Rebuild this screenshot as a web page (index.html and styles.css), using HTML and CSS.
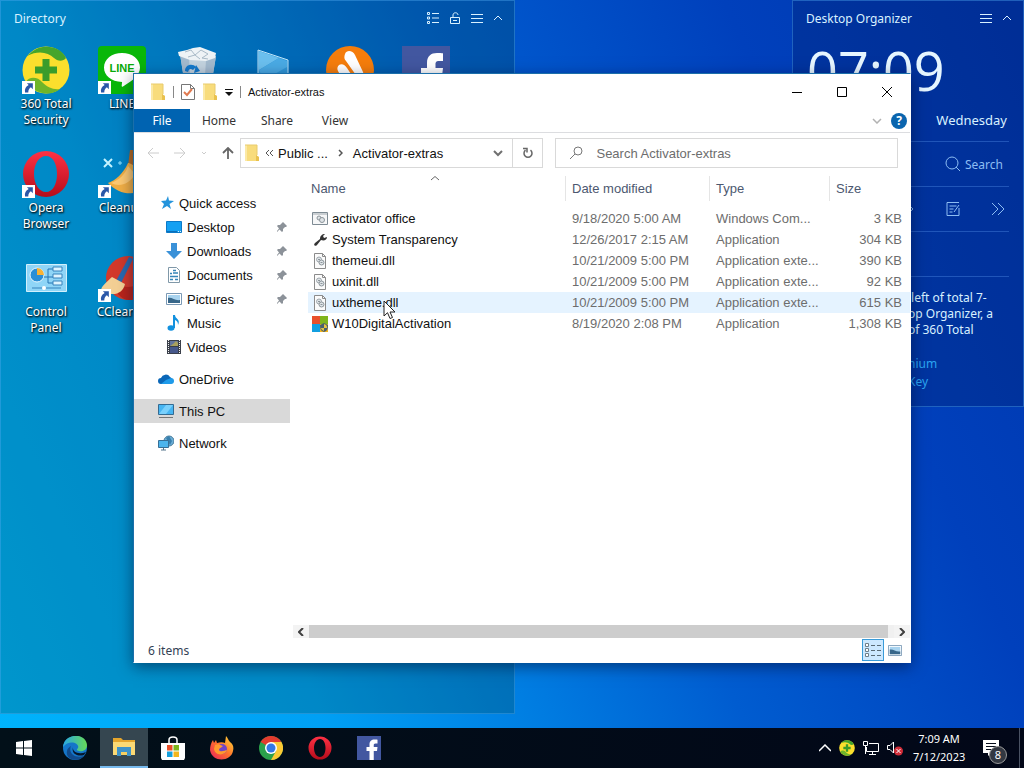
FILE: index.html
```html
<!DOCTYPE html>
<html lang="en">
<head>
    <meta charset="UTF-8">
    <meta name="viewport" content="width=device-width, initial-scale=1.0">
    <title>Activator-extras</title>
    <link rel="stylesheet" href="styles.css">
</head>
<body>
    <!-- shared symbols -->
    <svg class="defs" width="0" height="0" aria-hidden="true">
        <symbol id="folder" viewBox="0 0 16 18">
            <path d="M1 1h12v11l2 1v4H1z" fill="#f8dc7c"/>
            <path d="M12 11l3 2v4h-3z" fill="#e9c14e"/>
            <path d="M1 1h2v16H1z" fill="#fbe9a6"/>
            <path d="M1 1h12v10" fill="none" stroke="#e8cb6c"/>
        </symbol>
        <symbol id="pin" viewBox="0 0 12 12">
            <path d="M7 1l4 4-1 1-1 0-2 2 0 2-1 1-2.500-2.500L1 11l0-1L3 7.500 1 5l1-1h2l2-2z" fill="#8c9299"/>
        </symbol>
        <symbol id="dll" viewBox="0 0 16 16">
            <path d="M2.500.500h8l3 3v12h-11z" fill="#fbfbfb" stroke="#8b8b8b"/>
            <path d="M10.500.500v3h3" fill="none" stroke="#8b8b8b"/>
            <circle cx="7" cy="6.500" r="2.500" fill="#dfe4e7" stroke="#a0a8ae"/>
            <circle cx="9.500" cy="9.500" r="2.500" fill="#dfe4e7" stroke="#8b949a"/>
            <path d="M6 6.500h2M8.500 9.500h2" stroke="#8b949a"/>
        </symbol>
        <symbol id="shortcut" viewBox="0 0 12 12">
            <path d="M0 0h12v12H0z" fill="#fff"/>
            <path d="M4.500 2H10v5.500L8.200 5.800C6.500 7 5.800 8.300 5.800 10.500H2.800C2.200 7.500 3.500 5 6.200 3.800z" fill="#2a57a8"/>
        </symbol>
        <symbol id="total360" viewBox="0 0 48 48">
            <circle cx="24" cy="24" r="23.500" fill="#fbdf2d"/>
            <path d="M11 5C20-2 38-1 44 12c-3 4-9 3-12 0C26 6 16 4 5 10z" fill="#45a52c"/>
            <path d="M4 36c3-6 12-5 16 0 5 5 11 8 18 7-9 8-26 5-34-7z" fill="#6fb52a"/>
            <path d="M20.500 13h7v7.500h7.500v7h-7.500V35h-7v-7.500H13v-7h7.500z" fill="#3a9c2b"/>
        </symbol>
        <symbol id="opera" viewBox="0 0 48 48">
            <linearGradient id="operaRed" x1="0" y1="0" x2="0" y2="1">
                <stop offset="0" stop-color="#ff3144"/>
                <stop offset="1" stop-color="#b50d1b"/>
            </linearGradient>
            <path fill-rule="evenodd" d="M24 1a23 23 0 1 0 0 46a23 23 0 1 0 0-46zM24 6c7 0 11 8 11 18s-4 18-11 18-12-8-12-18S17 6 24 6z" fill="url(#operaRed)"/>
        </symbol>
        <symbol id="facebook" viewBox="0 0 48 48">
            <path d="M0 0h48v48H0z" fill="#4257a0"/>
            <path d="M25 48V30h-6v-8h6v-5c0-7 4-10 10-10 2 0 5 0 6 .3V15h-4c-3 0-3.500 1.500-3.500 3.500V22H41l-1 8h-6.500v18z" fill="#fff"/>
        </symbol>
        <symbol id="thumbs" viewBox="0 0 16 12">
            <path d="M.500.500h15v11H.500z" fill="#fff" stroke="#7a99b5"/>
            <path d="M2 2h12v8H2z" fill="#a8d3ef"/>
            <path d="M2 5c4-1 7 3 12 2v3H2z" fill="#38678a"/>
        </symbol>
    </svg>

    <main class="desktop">
        <section class="panel directory">
            <header class="panel-header">
                <h2>Directory</h2>
                <div class="panel-tools">
                    <button type="button" aria-label="List view"><svg width="12" height="12" viewBox="0 0 12 12"><path d="M.500.500h2v2h-2zM.500 5h2v2h-2zM.500 9.500h2v2h-2zM5 1.500h7M5 6h7M5 10.500h7"/></svg></button>
                    <button type="button" aria-label="Lock"><svg width="12" height="12" viewBox="0 0 12 12"><path d="M1.500 5.500h9v6h-9zM4 5.500V3c0-3 5-3 5 0M4 8.500h4"/></svg></button>
                    <button type="button" aria-label="Menu"><svg width="12" height="12" viewBox="0 0 12 12"><path d="M0 2.500h12M0 6.500h12M0 10.500h12"/></svg></button>
                    <button type="button" aria-label="Collapse"><svg width="10" height="12" viewBox="0 0 10 12"><path d="M1 8l4-4 4 4"/></svg></button>
                </div>
            </header>
            <div class="shortcuts">
                <a href="#" class="shortcut">
                    <svg class="shortcut-icon" viewBox="0 0 48 48"><use href="#total360"/><use href="#shortcut" x="0" y="35" width="13" height="13"/></svg>
                    360 Total Security
                </a>
                <a href="#" class="shortcut">
                    <svg class="shortcut-icon" viewBox="0 0 48 48">
                        <rect width="48" height="48" rx="4" fill="#09b709"/>
                        <path d="M24 7c10 0 18 6 18 14.500 0 8-9 14-17 19-1 .5-1.500 0-1.300-1l.4-3.500C13 35.500 6 29.500 6 21.500 6 13 14 7 24 7z" fill="#fff"/>
                        <text x="24" y="26" text-anchor="middle" class="line-logo">LINE</text>
                        <use href="#shortcut" x="0" y="35" width="13" height="13"/>
                    </svg>
                    LINE
                </a>
                <a href="#" class="shortcut" aria-label="Recycle Bin">
                    <svg class="shortcut-icon" viewBox="0 0 48 48">
                        <path d="M6 8l36 2-6 36H12z" fill="#c3d3df"/>
                        <path d="M6 8l9 4 2 34h-5zM42 10l-10 4-2 32h6z" fill="#a3bace"/>
                        <path d="M4 6l9-2 6-2 7-1 8 3 8 3-1 5-9 3-16-1-11-4z" fill="#eef3f6"/>
                        <path d="M11 6l6-2 4 5 6-5 7 4-6 4 6 1M14 11l7-2 5 4" fill="none" stroke="#a9bac7"/>
                        <path d="M11 25c0-7 8-8 11-4l-3 3c-3-2-4-1-5 2zM22 19l4 6-6 2zM10 29l6-2 3 6-5 2z" fill="#1379cb"/>
                    </svg>
                </a>
                <a href="#" class="shortcut" aria-label="This PC">
                    <svg class="shortcut-icon" viewBox="0 0 48 48">
                        <path d="M8 4l30 10v24L8 34z" fill="#2f97d8" stroke="#bfe3f7"/>
                        <path d="M9 5l20 7L9 24z" fill="#6bbfee"/>
                        <path d="M9 24l20-12 8 3v6L14 34z" fill="#4aaae4"/>
                    </svg>
                </a>
                <a href="#" class="shortcut" aria-label="Avast">
                    <svg class="shortcut-icon" viewBox="0 0 48 48">
                        <circle cx="24" cy="24" r="24" fill="#f57d0c"/>
                        <path d="M19 8c2-5 8-3 10 1l8 17c2 6-2 8-5 6L20 15c-2-2-2-4-1-7zM13 19c3-2 6 0 8 3l12 18H20l-8-15c-1-2-1-4 1-6z" fill="#fff"/>
                    </svg>
                </a>
                <a href="#" class="shortcut" aria-label="Facebook">
                    <svg class="shortcut-icon" viewBox="0 0 48 48"><use href="#facebook"/></svg>
                </a>
                <a href="#" class="shortcut first-col">
                    <svg class="shortcut-icon" viewBox="0 0 48 48"><use href="#opera"/><use href="#shortcut" x="0" y="35" width="13" height="13"/></svg>
                    Opera Browser
                </a>
                <a href="#" class="shortcut">
                    <svg class="shortcut-icon" viewBox="0 0 48 48">
                        <path d="M6 9l8 8M14 9l-8 8" stroke="#c4f3ff" stroke-width="2"/>
                        <path d="M20 13l4 0M22 11v4" stroke="#8fe0ff"/>
                        <path d="M32 0h5v16h-7z" fill="#b66b22"/>
                        <path d="M30 13c4 0 18 10 16 27-12 6-26 4-36-7 8-3 15-9 20-20z" fill="#f0ae45"/>
                        <path d="M30 16c-3 9-9 14-17 17 8 4 18 2 24-9z" fill="#fcc872"/>
                        <use href="#shortcut" x="0" y="35" width="13" height="13"/>
                    </svg>
                    Cleanup
                </a>
                <a href="#" class="shortcut first-col">
                    <svg class="shortcut-icon" viewBox="0 0 48 48">
                        <path d="M4.500 10.500h40v27h-40z" fill="#8fd5f7" stroke="#d1f0fc"/>
                        <circle cx="15" cy="21" r="7" fill="#2b8fd6" stroke="#e8f8ff"/>
                        <path d="M15 21v-7a7 7 0 0 1 7 7z" fill="#f9b233"/>
                        <path d="M22 23h4v-8h5M26 23h5M26 23v6h5" fill="none" stroke="#2475b5"/>
                        <path d="M31 13h9v4h-9zM31 20h9v4h-9zM31 27h9v4h-9z" fill="#dff4ff" stroke="#3683bd"/>
                        <path d="M10 34h29" stroke="#3683bd"/>
                        <circle cx="22" cy="34" r="2" fill="#fff"/>
                    </svg>
                    Control Panel
                </a>
                <a href="#" class="shortcut">
                    <svg class="shortcut-icon" viewBox="0 0 48 48">
                        <circle cx="30" cy="24" r="22" fill="#d2392b"/>
                        <path d="M20 30c6 4 14 4 20 0v14c-9 4-15 2-20-4z" fill="#b8241b"/>
                        <path d="M31 3l4 2-12 24-5-2z" fill="#2a68ae"/>
                        <path d="M14 23l13 7c-2 10-12 13-24 7 0-5 5-8 11-14z" fill="#f3cf94"/>
                        <use href="#shortcut" x="0" y="35" width="13" height="13"/>
                    </svg>
                    CCleaner
                </a>
            </div>
        </section>

        <aside class="panel organizer">
            <header class="panel-header">
                <h2>Desktop Organizer</h2>
                <div class="panel-tools">
                    <button type="button" aria-label="Menu"><svg width="12" height="12" viewBox="0 0 12 12"><path d="M0 2.500h12M0 6.500h12M0 10.500h12"/></svg></button>
                    <button type="button" aria-label="Collapse"><svg width="10" height="12" viewBox="0 0 10 12"><path d="M1 8l4-4 4 4"/></svg></button>
                </div>
            </header>
            <time class="big-clock">07:09</time>
            <p class="weekday">Wednesday</p>
            <div class="org-row">
                <button type="button" class="org-search">
                    <svg width="16" height="16" viewBox="0 0 16 16"><circle cx="7" cy="7" r="6"/><path d="M11 11l4 4"/></svg>
                    Search
                </button>
            </div>
            <div class="org-row org-icons">
                <button type="button" aria-label="Open"><svg width="14" height="14" viewBox="0 0 14 14"><path d="M7 2l5 5-5 5"/></svg></button>
                <button type="button" aria-label="Notes"><svg width="14" height="14" viewBox="0 0 14 14"><path d="M13 6v7.500H1V.500h12M3.500 4h7M3.500 7h4M3.500 10h3M13 3L8 10"/></svg></button>
                <button type="button" aria-label="More"><svg width="14" height="14" viewBox="0 0 14 14"><path d="M1 1l6 6-6 6M7 1l6 6-6 6"/></svg></button>
            </div>
            <div class="org-row"></div>
            <div class="trial">
                <p>&nbsp;left of total 7-<br>op Organizer, a<br>of 360 Total</p>
                <a href="#">nium</a>
                <a href="#">Key</a>
            </div>
        </aside>

        <section class="window">
            <header class="titlebar">
                <svg width="16" height="18"><use href="#folder"/></svg>
                <span class="sep"></span>
                <button type="button" aria-label="Properties"><svg width="14" height="16" viewBox="0 0 14 16"><path d="M.500.500h9l4 4v11H.500z" fill="#fff" stroke="#777"/><path d="M9.500.500v4h4" fill="none" stroke="#777"/><path d="M3 8l3 3 5-6" fill="none" stroke="#e07a50" stroke-width="2"/></svg></button>
                <button type="button" aria-label="New folder"><svg width="16" height="18"><use href="#folder"/></svg></button>
                <button type="button" aria-label="Customize"><svg width="8" height="8" viewBox="0 0 8 8"><path d="M0 1h8v1H0zM0 4h8L4 8z" fill="#111"/></svg></button>
                <span class="sep"></span>
                <h1>Activator-extras</h1>
                <div class="caption-buttons">
                    <button type="button" aria-label="Minimize"><svg width="12" height="12" viewBox="0 0 12 12"><path d="M1 6.500h10"/></svg></button>
                    <button type="button" aria-label="Maximize"><svg width="12" height="12" viewBox="0 0 12 12"><path d="M1.500 1.500h9v9h-9z"/></svg></button>
                    <button type="button" aria-label="Close"><svg width="12" height="12" viewBox="0 0 12 12"><path d="M1 1l10 10M11 1L1 11"/></svg></button>
                </div>
            </header>

            <nav class="ribbon">
                <button type="button" class="file-tab">File</button>
                <button type="button">Home</button>
                <button type="button">Share</button>
                <button type="button">View</button>
                <div class="ribbon-end">
                    <svg width="10" height="6" viewBox="0 0 10 6"><path d="M1 1l4 4 4-4" fill="none" stroke="#b2b2b2" stroke-width="1.500"/></svg>
                    <button type="button" class="help" aria-label="Help">?</button>
                </div>
            </nav>

            <div class="toolbar">
                <div class="nav-buttons">
                    <button type="button" aria-label="Back"><svg width="12" height="12" viewBox="0 0 12 12"><path d="M12 6H1M6 1L1 6l5 5" stroke="#ccc"/></svg></button>
                    <button type="button" aria-label="Forward"><svg width="12" height="12" viewBox="0 0 12 12"><path d="M0 6h11M6 1l5 5-5 5" stroke="#ccc"/></svg></button>
                    <button type="button" aria-label="Recent"><svg width="6" height="4" viewBox="0 0 6 4"><path d="M1 1l2 2 2-2" stroke="#ccc"/></svg></button>
                    <button type="button" aria-label="Up"><svg width="12" height="12" viewBox="0 0 12 12"><path d="M6 12V1M1 6l5-5 5 5" stroke="#666" stroke-width="1.800"/></svg></button>
                </div>
                <div class="address">
                    <svg width="16" height="18"><use href="#folder"/></svg>
                    <svg width="8" height="8" viewBox="0 0 8 8"><path d="M4 1L1 4l3 3M8 1L5 4l3 3" fill="none" stroke="#555"/></svg>
                    <button type="button">Public ...</button>
                    <svg class="crumb-sep" width="5" height="8" viewBox="0 0 5 8"><path d="M1 1l3 3-3 3" fill="none" stroke="#555" stroke-width="1.500"/></svg>
                    <button type="button">Activator-extras</button>
                    <button type="button" class="address-drop" aria-label="Previous locations"><svg width="10" height="7" viewBox="0 0 10 7"><path d="M1 1l4 4 4-4" fill="none" stroke="#707070" stroke-width="2"/></svg></button>
                    <button type="button" class="refresh" aria-label="Refresh"><svg width="12" height="12" viewBox="0 0 12 12"><path d="M8.500 3.200A4 4 0 1 1 3.500 3.200M1 1.500h4v4" fill="none" stroke="#666" stroke-width="1.500"/></svg></button>
                </div>
                <div class="search-box">
                    <svg width="14" height="14" viewBox="0 0 14 14"><circle cx="9" cy="5" r="4" fill="none" stroke="#777"/><path d="M6 8l-5 5" stroke="#777"/></svg>
                    <input type="text" aria-label="Search Activator-extras" placeholder="Search Activator-extras">
                </div>
            </div>

            <div class="content">
                <nav class="sidebar">
                    <a href="#"><svg width="14" height="14" viewBox="0 0 14 14"><path d="M8 0l1 4.500 5 .5-4.500 3 1.500 5-4-3-5 3 2-5-3-3 5-.5z" fill="#2494dc"/></svg>Quick access</a>
                    <a href="#" class="sub"><svg width="16" height="14" viewBox="0 0 16 14"><path d="M.500 1.500h15v11H.500z" fill="#14a0f2" stroke="#0b79c8"/><path d="M1 11.500h10" stroke="#0b6fb8"/><path d="M12 11.500h3" stroke="#d5efff" stroke-dasharray="1 1"/></svg>Desktop<svg class="pin" width="12" height="12"><use href="#pin"/></svg></a>
                    <a href="#" class="sub"><svg width="16" height="16" viewBox="0 0 16 16"><path d="M5 0h6v8h5l-8 8-8-8h5z" fill="#3a91d8"/></svg>Downloads<svg class="pin" width="12" height="12"><use href="#pin"/></svg></a>
                    <a href="#" class="sub"><svg width="16" height="16" viewBox="0 0 16 16"><path d="M2.500.500h8l3 3v12h-11z" fill="#fff" stroke="#8098a8"/><path d="M7 3.500h3M4 6.500h2M7 6h5M4 9.500h8M4 12.500h3M9 12.500h3" stroke="#3685b8" stroke-width="1.500"/></svg>Documents<svg class="pin" width="12" height="12"><use href="#pin"/></svg></a>
                    <a href="#" class="sub"><svg width="16" height="12"><use href="#thumbs"/></svg>Pictures<svg class="pin" width="12" height="12"><use href="#pin"/></svg></a>
                    <a href="#" class="sub"><svg width="16" height="16" viewBox="0 0 16 16"><ellipse cx="5" cy="13" rx="3.500" ry="2.800" fill="#1291df"/><path d="M7 0h2c0 4 6 4 3 10 0-3-1-4-3-5v8H7z" fill="#1291df"/></svg>Music</a>
                    <a href="#" class="sub"><svg width="16" height="16" viewBox="0 0 16 16"><path d="M1 1h14v14H1z" fill="#3a3f4a"/><path d="M4 2h8v5H4z" fill="#61749e"/><path d="M4 8h8v6H4z" fill="#46588b"/><path d="M7 5l3-3 2 2v3H4z" fill="#aaa15e"/><path d="M2.500 1v14M13.500 1v14" stroke="#f0f0f0" stroke-dasharray="1 1"/></svg>Videos</a>
                    <a href="#" class="spaced"><svg width="16" height="12" viewBox="0 0 16 12"><path d="M3 11a3 3 0 0 1 0-6 5 5 0 0 1 9-1 4 4 0 0 1 1 7z" fill="#0a67b8"/><path d="M3 11l5-4 5-2a3 3 0 0 1 0 6z" fill="#1f9bea"/></svg>OneDrive</a>
                    <a href="#" class="spaced active"><svg width="16" height="16" viewBox="0 0 16 16"><path d="M.500 1.500h15v10H.500z" fill="#46b5f2" stroke="#346b92"/><path d="M8 2h7l-7 9H1z" fill="#79d0fc"/><path d="M1 14.500h14" stroke="#777"/></svg>This PC</a>
                    <a href="#" class="spaced"><svg width="16" height="16" viewBox="0 0 16 16"><circle cx="11" cy="6" r="5" fill="#6caed6" stroke="#487c9c"/><path d="M8 3l3-2 3 5-2 4z" fill="#377fae"/><path d="M.500 5.500h10v7H.500z" fill="#4cb4ec" stroke="#376f96"/><path d="M3 15h5M5.500 13v2" stroke="#54758b"/></svg>Network</a>
                </nav>

                <div class="file-pane">
                    <table class="files">
                        <colgroup><col><col class="col-date"><col class="col-type"><col class="col-size"></colgroup>
                        <thead>
                            <tr><th>Name<svg class="sort" width="8" height="5" viewBox="0 0 8 5"><path d="M0 4l4-3.500L8 4" fill="none" stroke="#666"/></svg></th><th>Date modified</th><th>Type</th><th>Size</th></tr>
                        </thead>
                        <tbody>
                            <tr><td><span class="file"><svg width="16" height="16" viewBox="0 0 16 16"><path d="M.500 1.500h15v12H.500z" fill="#f6f7f8" stroke="#7e8b94"/><path d="M1 3h14" stroke="#9fa8ae"/><circle cx="7" cy="7" r="2" fill="#dfe4e7" stroke="#8b949a"/><circle cx="10" cy="9" r="2.500" fill="#dfe4e7" stroke="#8b949a"/></svg>activator office</span></td><td>9/18/2020 5:00 AM</td><td>Windows Com...</td><td>3 KB</td></tr>
                            <tr><td><span class="file"><svg width="16" height="16" viewBox="0 0 16 16"><path d="M13 2l-2 2 1 2 3-1c0 3-3 4-6 3l-4 5c-2 2-4 0-2-2l5-4c0-3 2-5 5-5z" fill="#333"/></svg>System Transparency</span></td><td>12/26/2017 2:15 AM</td><td>Application</td><td>304 KB</td></tr>
                            <tr><td><span class="file"><svg width="16" height="16"><use href="#dll"/></svg>themeui.dll</span></td><td>10/21/2009 5:00 PM</td><td>Application exte...</td><td>390 KB</td></tr>
                            <tr><td><span class="file"><svg width="16" height="16"><use href="#dll"/></svg>uxinit.dll</span></td><td>10/21/2009 5:00 PM</td><td>Application exte...</td><td>92 KB</td></tr>
                            <tr class="hovered"><td><span class="file"><svg width="16" height="16"><use href="#dll"/></svg>uxtheme.dll</span></td><td>10/21/2009 5:00 PM</td><td>Application exte...</td><td>615 KB</td></tr>
                            <tr><td><span class="file"><svg width="16" height="16" viewBox="0 0 16 16"><path d="M0 0h8v8H0z" fill="#e8502b"/><path d="M8 0h8v8H8z" fill="#80b51c"/><path d="M0 8h8v8H0z" fill="#129fe0"/><path d="M8 8h8v8H8z" fill="#f2b41b"/><path d="M12 7l4 2c0 4-1 6-4 7-3-1-4-3-4-7z" fill="#49606f"/><path d="M12 8v4h3c0-2 0-3-3-4zM12 12v3c-2-1-3-2-3-3z" fill="#e6c442"/></svg>W10DigitalActivation</span></td><td>8/19/2020 2:08 PM</td><td>Application</td><td>1,308 KB</td></tr>
                        </tbody>
                    </table>
                    <div class="hscroll">
                        <button type="button" aria-label="Scroll left"><svg width="6" height="8" viewBox="0 0 6 8"><path d="M5 0L1 4l4 4" fill="none" stroke="#404040" stroke-width="2"/></svg></button>
                        <div class="track"><div class="thumb"></div></div>
                        <button type="button" aria-label="Scroll right"><svg width="6" height="8" viewBox="0 0 6 8"><path d="M1 0l4 4-4 4" fill="none" stroke="#404040" stroke-width="2"/></svg></button>
                    </div>
                </div>
            </div>

            <footer class="statusbar">
                <span>6 items</span>
                <div class="view-modes">
                    <button type="button" class="selected" aria-label="Details"><svg width="16" height="14" viewBox="0 0 16 14"><path d="M.500.500h3v3h-3zM.500 5.500h3v3h-3zM.500 10.500h3v3h-3z" fill="#fff" stroke="#6e7f8b"/><path d="M6 2.500h4M12 2.500h4M6 7.500h4M12 7.500h4M6 12.500h4M12 12.500h4" stroke="#596a75"/></svg></button>
                    <button type="button" aria-label="Large thumbnails"><svg width="14" height="11" viewBox="0 0 16 12" preserveAspectRatio="none"><use href="#thumbs"/></svg></button>
                </div>
            </footer>
        </section>

        <svg class="cursor" width="14" height="20" viewBox="0 0 14 20"><path d="M1 1v15l3.500-3.300L7 18.500l2.500-1L7 12h5z" fill="#fff" stroke="#222"/></svg>
    </main>

    <footer class="taskbar">
        <button type="button" class="start" aria-label="Start"><svg width="16" height="16" viewBox="0 0 16 16"><path d="M0 2l7-1v6.500H0zM8 1l8-1v7.500H8zM0 8.500h7V15l-7-1zM8 8.500h8V16l-8-1z" fill="#fff"/></svg></button>
        <button type="button" aria-label="Edge">
            <svg width="24" height="24" viewBox="0 0 24 24">
                <linearGradient id="edgeTop"><stop offset="0" stop-color="#28a7e3"/><stop offset="1" stop-color="#66d957"/></linearGradient>
                <circle cx="12" cy="12" r="12" fill="#1576c9"/>
                <path d="M0 11C1-3 23-4 24 9c0 5-4 7-8 6-2 0-3-1-1-3 2-5-9-9-15-1z" fill="url(#edgeTop)"/>
                <path d="M8 10c-3 6 3 13 13 10-6 7-19 4-17-5 0-2 2-4 4-5z" fill="#114a8b"/>
                <path d="M10 11c-1 5 6 8 13 5l-2 3c-6 2-13-1-11-8z" fill="#06172b"/>
            </svg>
        </button>
        <button type="button" class="running" aria-label="File Explorer">
            <svg width="22" height="20" viewBox="0 0 22 20"><path d="M0 1h8l2 2h12v5H0z" fill="#e5a52c"/><path d="M0 5h22v13H0z" fill="#fbd974"/><path d="M4 10h14v9h-4v-4H8v4H4z" fill="#3e92c8"/><path d="M8 15h6v3H8z" fill="#f6cf61"/></svg>
        </button>
        <button type="button" aria-label="Store">
            <svg width="24" height="24" viewBox="0 0 24 24"><path d="M8 8V4c0-4 8-4 8 0v4" fill="none" stroke="#fff" stroke-width="1.500"/><path d="M0 7h24v15l-1 2H1l-1-2z" fill="#fff"/><path d="M6 9h5.500v5.500H6z" fill="#ea4e27"/><path d="M12.500 9H18v5.500h-5.500z" fill="#7db51d"/><path d="M6 15.500h5.500V21H6z" fill="#16a0dd"/><path d="M12.500 15.500H18V21h-5.500z" fill="#f3b61c"/></svg>
        </button>
        <button type="button" aria-label="Firefox">
            <svg width="24" height="24" viewBox="0 0 24 24">
                <linearGradient id="fox" x1="1" y1="0" x2="0" y2="1"><stop offset="0" stop-color="#ffdf36"/><stop offset=".5" stop-color="#ff702d"/><stop offset="1" stop-color="#e8205c"/></linearGradient>
                <path d="M16 0c2 2 2 4 4 6 3 2 4 5 3 9-2 11-21 12-23-1 0-4 1-7 3-10l1 3 2-3 1 3c3-1 6-1 8 0z" fill="url(#fox)"/>
                <circle cx="12" cy="13" r="5" fill="#7144c8"/>
                <path d="M5 9c4-2 5 0 8 1-2 2-4 2-4 4 2 3 6 0 8 0-2 6-12 6-13-1z" fill="#ff9a2e"/>
            </svg>
        </button>
        <button type="button" aria-label="Chrome">
            <svg width="24" height="24" viewBox="0 0 24 24"><circle cx="12" cy="12" r="12" fill="#2ba14b"/><path d="M12 12L1.600 6A12 12 0 0 1 22.400 6z" fill="#e33b2e"/><path d="M12 6h10.400A12 12 0 0 1 12 24l5-9z" fill="#fcc934"/><circle cx="12" cy="12" r="6" fill="#fff"/><circle cx="12" cy="12" r="4.500" fill="#3478e5"/></svg>
        </button>
        <button type="button" aria-label="Opera"><svg width="24" height="24"><use href="#opera"/></svg></button>
        <button type="button" aria-label="Facebook"><svg width="24" height="24"><use href="#facebook"/></svg></button>

        <div class="tray">
            <button type="button" aria-label="Hidden icons"><svg width="12" height="8" viewBox="0 0 12 8"><path d="M0 7l6-6 6 6" fill="none" stroke="#fff" stroke-width="1.500"/></svg></button>
            <button type="button" aria-label="360"><svg width="16" height="16"><use href="#total360"/></svg></button>
            <button type="button" aria-label="Network"><svg width="16" height="16" viewBox="0 0 16 16"><path d="M6 3.500h9.500v8H3.500V7M.500 1.500h4v4h-4zM2.500 6v8M9.500 12v2M6 14.500h7" fill="none" stroke="#fff"/></svg></button>
            <button type="button" aria-label="Volume muted"><svg width="16" height="16" viewBox="0 0 16 16"><path d="M.500 5.500H3L6.500 2v11L3 9.500H.500z" fill="none" stroke="#fff"/><circle cx="11.500" cy="11" r="4.500" fill="#d02c38"/><path d="M9.500 9l4 4M13.500 9l-4 4" stroke="#fff"/></svg></button>
            <time class="clock">7:09 AM<br>7/12/2023</time>
            <button type="button" class="notifications" aria-label="Notifications">
                <svg width="16" height="16" viewBox="0 0 16 16"><path d="M0 0h16v13H8l-3 3v-3H0z" fill="#fff"/><path d="M3 3.500h10M3 6.500h10M3 9.500h6" stroke="#060d1c"/></svg>
                <span class="badge">8</span>
            </button>
        </div>
    </footer>
</body>
</html>
```
FILE: styles.css
```css
* {
    box-sizing: border-box;
}
body {
    margin: 0;
    height: 100vh;
    display: flex;
    flex-direction: column;
    overflow: hidden;
    font-family: "Noto Sans", "Open Sans", sans-serif;
    font-size: 12px;
    background: linear-gradient(66deg, #00b4fc 0%, #00a0f4 25%, #005cd0 56%, #0040bc 78%, #0036ac 100%);
}
h1, h2, p {
    margin: 0;
    font-size: inherit;
    font-weight: 400;
}
a {
    color: inherit;
    text-decoration: none;
}
button {
    display: flex;
    align-items: center;
    justify-content: center;
    margin: 0;
    padding: 0;
    border: none;
    background: none;
    color: inherit;
    font: inherit;
}
svg {
    flex: none;
}
.defs {
    position: absolute;
}

/* desktop */
.desktop {
    position: relative;
    flex: 1;
    min-height: 0;
    display: flex;
    justify-content: space-between;
    align-items: flex-start;
}
.panel {
    color: #d9f1ff;
    border: 1px solid rgba(80, 170, 240, 0.4);
}
.directory {
    width: calc(50% + 3px);
    height: calc(100% - 14px);
    background: rgba(0, 70, 70, 0.26);
}
.organizer {
    width: 232px;
    padding-bottom: 15px;
    background: rgba(0, 20, 80, 0.24);
}
.panel-header {
    display: flex;
    align-items: center;
    justify-content: space-between;
    height: 34px;
    padding: 0 11px 0 13px;
}
.panel-tools {
    display: flex;
    gap: 10px;
}
.panel-tools svg {
    fill: none;
    stroke: #d9f1ff;
}
.shortcuts {
    display: grid;
    grid-template-columns: repeat(6, 76px);
    grid-auto-rows: 104px;
    padding: 11px 7px;
}
.shortcut {
    display: flex;
    flex-direction: column;
    align-items: center;
    padding: 0 10px;
    line-height: 16px;
    text-align: center;
    color: #fff;
    text-shadow: 1px 1px 2px #000, 0 1px 2px rgba(0, 0, 0, 0.6);
}
.first-col {
    grid-column: 1;
}
.shortcut-icon {
    width: 48px;
    height: 48px;
    margin-bottom: 2px;
}
.line-logo {
    font: bold 11px "Liberation Sans", sans-serif;
    fill: #09a909;
    text-shadow: none;
}

/* organizer */
.big-clock {
    display: block;
    padding-left: 14px;
    font-family: "Open Sans", sans-serif;
    font-size: 54px;
    line-height: 70px;
    color: #e6f6ff;
}
.weekday {
    margin-bottom: 6px;
    padding-right: 16px;
    font-size: 13px;
    line-height: 30px;
    text-align: right;
}
.org-row {
    display: flex;
    align-items: center;
    justify-content: flex-end;
    height: 45px;
    margin: 0 14px;
    border-top: 1px solid rgba(80, 140, 230, 0.4);
}
.org-row svg {
    fill: none;
    stroke: #8dbdf3;
}
.org-search {
    gap: 4px;
    padding-right: 6px;
    color: #8dbdf3;
}
.org-icons {
    gap: 31px;
    padding-right: 4px;
}
.trial {
    margin: 0 14px;
    padding: 13px 0 0 101px;
    border-top: 1px solid rgba(80, 140, 230, 0.4);
    line-height: 16px;
    white-space: nowrap;
}
.trial p {
    margin-bottom: 17px;
}
.trial a {
    display: block;
    line-height: 18px;
    color: #2ba5f2;
}

/* explorer window */
.window {
    position: absolute;
    top: 73px;
    right: 113px;
    bottom: 65px;
    left: 133px;
    display: flex;
    flex-direction: column;
    border: 1px solid #1b6faa;
    border-right-color: #fff;
    border-bottom-color: #fff;
    background: #fff;
    color: #111;
    box-shadow: 0 4px 14px rgba(0, 10, 40, 0.5);
}
.titlebar {
    display: flex;
    align-items: center;
    gap: 7px;
    height: 35px;
    padding: 0 1px 0 16px;
    font-family: "Liberation Sans", sans-serif;
    font-size: 11px;
}
.sep {
    width: 1px;
    height: 12px;
    background: #888;
}
.caption-buttons {
    display: flex;
    margin-left: auto;
}
.caption-buttons button {
    width: 45px;
    height: 34px;
}
.caption-buttons svg {
    fill: none;
    stroke: #000;
}
.ribbon {
    display: flex;
    height: 24px;
    border-bottom: 1px solid #dcdde0;
    color: #333;
}
.ribbon > button {
    width: 58px;
}
.ribbon > .file-tab {
    width: 56px;
    background: #0063b1;
    color: #fff;
}
.ribbon-end {
    display: flex;
    align-items: center;
    gap: 9px;
    margin-left: auto;
    padding-right: 3px;
}
.help {
    width: 16px;
    height: 16px;
    border-radius: 50%;
    background: #0a65ae;
    color: #fff;
    font-weight: 700;
}
.toolbar {
    display: flex;
    align-items: center;
    height: 40px;
    padding-right: 12px;
    font-family: "Liberation Sans", sans-serif;
    font-size: 13px;
}
.nav-buttons {
    display: flex;
    gap: 15px;
    width: 106px;
    padding-left: 13px;
}
.nav-buttons svg {
    fill: none;
}
.address {
    display: flex;
    flex: 308;
    align-items: center;
    gap: 5px;
    height: 30px;
    margin-right: 12px;
    padding-left: 3px;
    border: 1px solid #d9d9d9;
}
.crumb-sep {
    margin: 0 5px;
}
.address-drop {
    margin-left: auto;
    padding-right: 4px;
}
.refresh {
    width: 30px;
    height: 28px;
    border-left: 1px solid #d9d9d9;
}
.search-box {
    display: flex;
    flex: 338;
    align-items: center;
    gap: 13px;
    height: 30px;
    padding-left: 13px;
    border: 1px solid #d9d9d9;
}
.search-box input {
    flex: 1;
    min-width: 0;
    padding: 0;
    border: none;
    outline: none;
    background: none;
    font: inherit;
}
.search-box input::placeholder {
    color: #6d6d6d;
}
.content {
    display: flex;
    flex: 1;
    min-height: 0;
    font-family: "Liberation Sans", sans-serif;
    font-size: 13px;
}
.sidebar {
    width: 156px;
    padding-top: 18px;
}
.sidebar a {
    display: flex;
    align-items: center;
    gap: 5px;
    height: 24px;
    padding: 0 2px 0 24px;
}
.sidebar a:first-child {
    padding-left: 26px;
}
.sidebar .sub {
    padding-left: 32px;
}
.sidebar .spaced {
    margin-top: 8px;
}
.sidebar .active {
    background: #d9d9d9;
}
.pin {
    margin-left: auto;
}
.file-pane {
    display: flex;
    flex: 1;
    flex-direction: column;
    justify-content: space-between;
    min-width: 0;
    margin-left: 3px;
}
.files {
    width: 100%;
    padding: 3px 0 0 15px;
    border-spacing: 0;
    table-layout: fixed;
    color: #6d6d6d;
}
.col-date {
    width: 144px;
}
.col-type {
    width: 120px;
}
.col-size {
    width: 80px;
}
.files th {
    position: relative;
    height: 25px;
    padding: 0 0 0 6px;
    border-right: 1px solid #e5e5e5;
    font-weight: 400;
    text-align: left;
    color: #4c5870;
}
.files th:first-child {
    padding-left: 3px;
}
.files th:last-child {
    border-right: none;
}
.sort {
    position: absolute;
    top: 0;
    left: 48%;
}
.files tbody::before {
    content: "";
    display: block;
    height: 7px;
}
.files td {
    height: 21px;
    padding: 0 0 0 6px;
    white-space: nowrap;
}
.files td:first-child {
    padding-left: 4px;
    color: #111;
}
.files td:last-child {
    padding-right: 8px;
    text-align: right;
}
.file {
    display: flex;
    align-items: center;
    gap: 4px;
}
.hovered {
    background: #e5f3ff;
}
.hscroll {
    display: flex;
    height: 13px;
}
.hscroll button {
    width: 16px;
    background: #f3f3f3;
}
.track {
    flex: 1;
    background: #f0f0f0;
}
.thumb {
    width: 99%;
    height: 13px;
    background: #cdcdcd;
}
.statusbar {
    display: flex;
    align-items: center;
    justify-content: space-between;
    height: 24px;
    padding: 0 4px 0 14px;
    color: #333f55;
}
.view-modes {
    display: flex;
}
.view-modes button {
    width: 22px;
    height: 22px;
}
.view-modes .selected {
    border: 1px solid #3a9bd8;
    background: #cce8ff;
}
.cursor {
    position: absolute;
    top: 300px;
    left: 383px;
}

/* taskbar */
.taskbar {
    display: flex;
    gap: 1px;
    height: 40px;
    background: linear-gradient(90deg, #021019, #020718);
    color: #fff;
}
.taskbar > button {
    width: 48px;
}
.taskbar > .start {
    width: 50px;
    padding-right: 2px;
}
.taskbar > .running {
    background: #354650;
    border-bottom: 2px solid #76b9ed;
}
.tray {
    display: flex;
    align-items: center;
    gap: 8px;
    margin-left: auto;
    margin-right: 4px;
    padding-right: 16px;
    border-right: 1px solid #4a5263;
}
.clock {
    width: 52px;
    margin: 0 6px 0 2px;
    font-size: 11px;
    line-height: 18px;
    text-align: center;
    white-space: nowrap;
}
.notifications {
    position: relative;
    width: 24px;
    height: 24px;
}
.badge {
    position: absolute;
    top: 10px;
    left: 10px;
    width: 18px;
    height: 18px;
    border: 1px solid #999;
    border-radius: 50%;
    background: #333842;
    font-size: 11px;
    line-height: 16px;
    text-align: center;
}
```
